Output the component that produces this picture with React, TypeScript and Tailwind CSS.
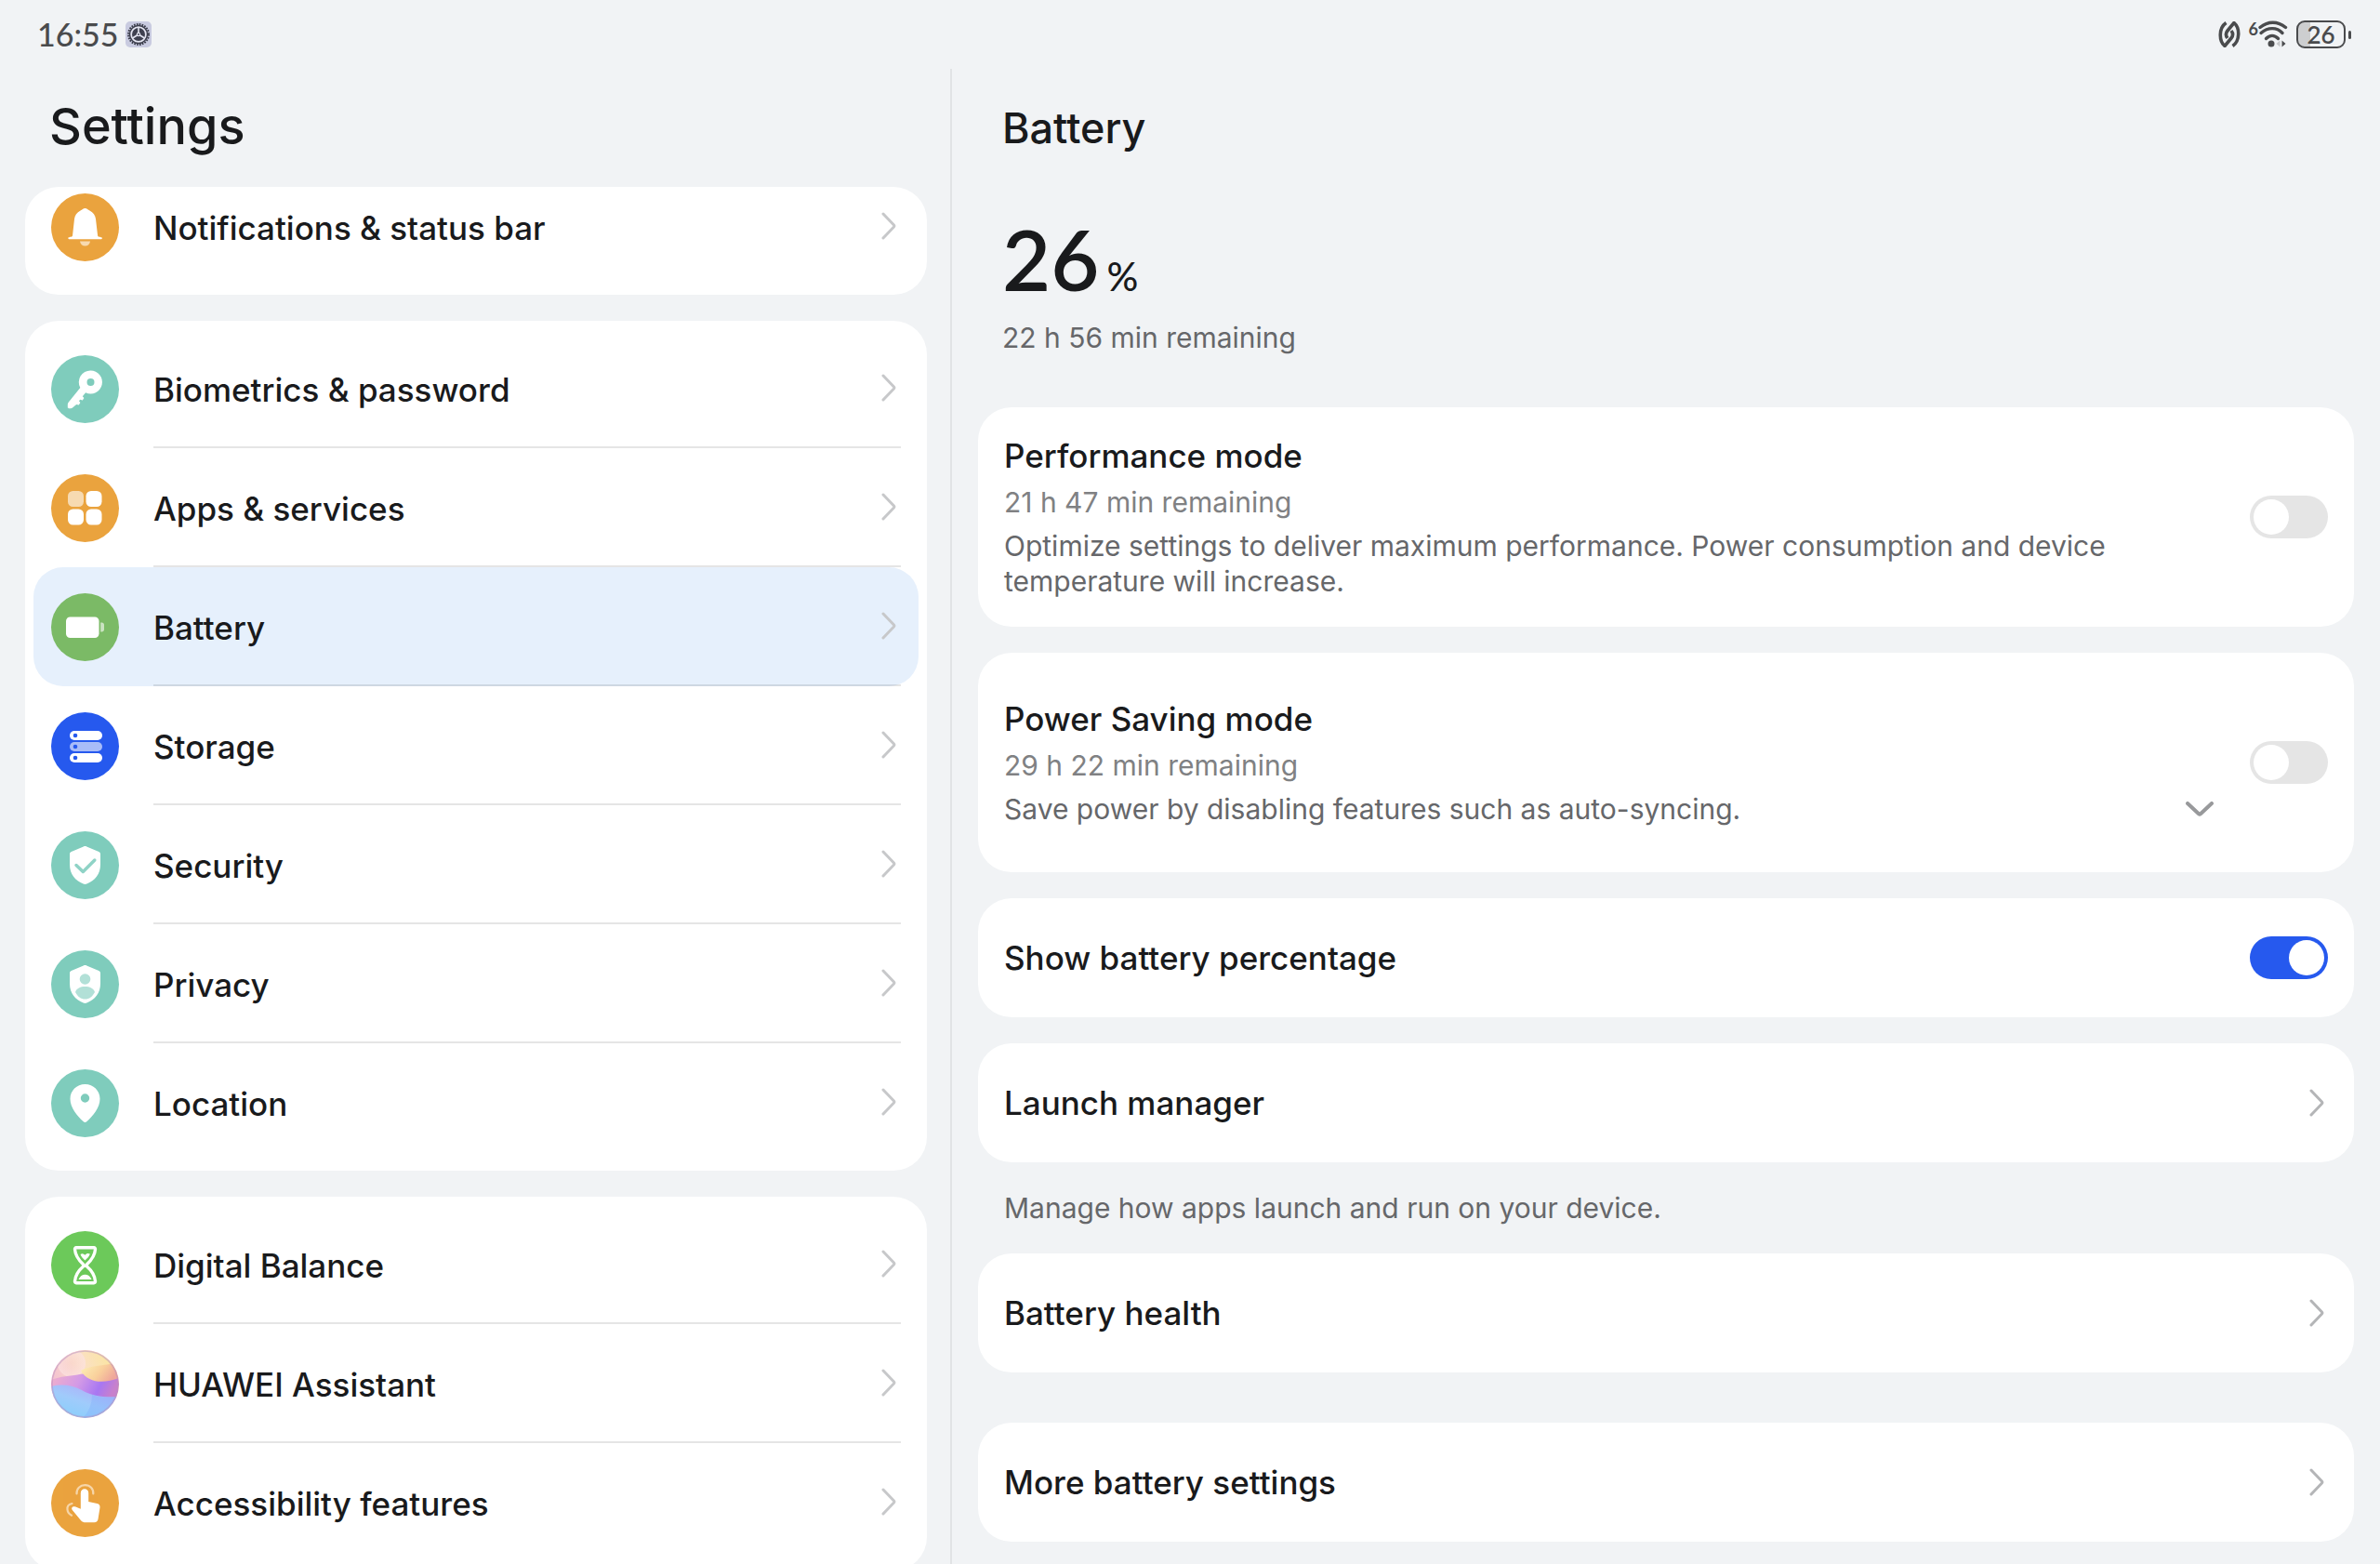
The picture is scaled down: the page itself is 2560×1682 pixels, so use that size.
import { useId, useState, type ReactNode } from "react";
import clsx from "clsx";

const icons: Record<string, ReactNode> = {
  bell: (
    <>
      <path d="M36.5 16c-2.2 0-3 1.5-5 2.6-3.8 2-6 5-6.5 9L23 45.5c-.2 1.6-4.7 1.2-4.7 2.5 0 .9.7 1.2 1.5 1.2h33.6c.8 0 1.5-.3 1.5-1.2 0-1.3-4.6-.9-4.8-2.5L48 27.6c-.5-4-2.7-7-6.5-9-2-1.100-2.800-2.600-5-2.600z" />
      <path d="M31 51.500h11c-.4 3-2.600 5-5.500 5s-5.100-2-5.500-5z" opacity=".6" />
    </>
  ),
  key: (
    <path
      fillRule="evenodd"
      d="M42.5 16.5a12.500 12.500 0 1 1-5.400 23.800l-3.300 4 1.600 1.600-1.600 2.600-2.600-.7-1.200 1.500 1.400 1.800-1.600 2.300-2.600-.4L23 56.500c-.6.5-1.300.7-2 .7h-2c-.8 0-1.200-.4-1.200-1.200v-3c0-1 .3-1.800 1-2.600L31.300 35A12.500 12.500 0 0 1 42.500 16.500zm0 8.500a4 4 0 1 0 0 8 4 4 0 0 0 0-8z"
    />
  ),
  apps: (
    <>
      <rect x="18" y="18" width="17" height="17" rx="5.5" opacity=".6" />
      <rect x="37.5" y="18" width="17" height="17" rx="5.5" />
      <rect x="18" y="37.5" width="17" height="17" rx="5.5" />
      <rect x="37.5" y="37.5" width="17" height="17" rx="5.5" />
    </>
  ),
  battery: (
    <>
      <rect x="16" y="25.5" width="35.5" height="22.5" rx="4.5" />
      <path d="M53.2 31.5h1.3c1.500 0 2.500 1 2.500 2.500v5c0 1.500-1 2.500-2.500 2.500h-1.300z" opacity=".6" />
    </>
  ),
  storage: (
    <>
      <rect x="20" y="20" width="35" height="10" rx="5" />
      <rect x="20" y="32" width="35" height="10" rx="5" opacity=".6" />
      <rect x="20" y="44" width="35" height="10" rx="5" />
      <g fill="#2659ee">
        <circle cx="26" cy="25" r="2.3" />
        <circle cx="26" cy="37" r="2.3" />
        <circle cx="26" cy="49" r="2.3" />
      </g>
    </>
  ),
  security: (
    <>
      <path d="M34.8 16.5c1.100-.6 2.300-.6 3.400 0L51.300 22c1.100.5 1.700 1.300 1.700 2.500V36c0 10-6 17.200-14.600 20.500-1.300.5-2.500.5-3.800 0C26 53.200 20 46 20 36V24.500c0-1.200.6-2 1.700-2.500z" />
      <path d="M27 36.500l7.300 7L46.800 31" fill="none" stroke="#8fd3c6" strokeWidth="3.500" strokeLinecap="round" strokeLinejoin="round" />
    </>
  ),
  privacy: (
    <>
      <path d="M34.8 16.5c1.100-.6 2.300-.6 3.400 0L51.300 22c1.100.5 1.700 1.300 1.700 2.500V36c0 10-6 17.200-14.600 20.500-1.300.5-2.500.5-3.800 0C26 53.200 20 46 20 36V24.500c0-1.200.6-2 1.700-2.500z" />
      <g fill="#b2e0d7">
        <circle cx="36.5" cy="31" r="5.8" />
        <path d="M26 45c1.500-4.200 5.500-6 10.500-6S45.500 40.800 47 45c-2.300 4.500-6 7.600-10.500 7.600S28.300 49.500 26 45z" />
      </g>
    </>
  ),
  location: (
    <path
      fillRule="evenodd"
      d="M36.5 16c9 0 16 7 16 15.700 0 9.300-7.500 18.300-14 24.400-1.300 1.200-2.700 1.200-4 0-6.500-6.100-14-15.100-14-24.400C20.500 23 27.500 16 36.500 16zm0 10.300a4.700 4.700 0 1 0 0 9.400 4.700 4.700 0 0 0 0-9.400z"
    />
  ),
  hourglass: (
    <>
      <path
        d="M27 17.800h19c1 0 1.600.7 1.500 1.700C47 27 42.500 32 38.500 35.700c-.8.8-.8 1.500 0 2.300C42.500 41.500 47 46.500 47.500 54c.1 1-.5 1.700-1.500 1.700H27c-1 0-1.600-.7-1.500-1.700.5-7.500 5-12.500 9-16 .8-.8.8-1.500 0-2.300C30.500 32 26 27 25.500 19.500c-.1-1 .5-1.700 1.500-1.700z"
        fill="none"
        stroke="white"
        strokeWidth="3.4"
      />
      <path d="M31.500 25c1.800-1.200 3.500-.8 5 .8 1.500-2 3.500-2.200 5.300-1.200-.8 2.600-2.900 4.800-5.300 6.900-2.200-1.900-4.200-4-5-6.500z" />
      <path d="M29.500 52c1.500-3.500 4-5.200 7-5.200s5.500 1.700 7 5.200z" />
    </>
  ),
  touch: (
    <>
      <path d="M31.800 25.500a4.200 4.200 0 0 1 8.400 0V35l9.300 2c2.200.5 3.300 2 3 4.200l-2 12.500c-.4 2.200-1.700 3.500-4 3.500h-9.500c-2 0-3.500-.6-4.900-2L22.800 44c-1-1.200-.8-2.700.4-3.400 1-.6 2-.6 3.200-.1l5.400 2.300z" />
      <g fill="none" stroke="white" strokeWidth="2.2" strokeLinecap="round" opacity=".55">
        <path d="M27.500 26.500c-.3-5.500 3.700-9.300 9-9.300s9.200 3.800 8.800 9.300" />
        <path d="M22.500 37c-3.500.7-5.500 3.300-5 6.700.3 2.600 1.800 4.600 4.500 6" />
      </g>
    </>
  ),
};

function RoundIcon({ name }: { name: string }) {
  return (
    <svg viewBox="0 0 73 73" fill="white" className="size-full">
      {icons[name]}
    </svg>
  );
}

function AssistantIcon() {
  return (
    <svg viewBox="0 0 73 73" className="size-full">
      <defs>
        <linearGradient id="sky" x1="0" y1=".5" x2="1" y2=".1">
          <stop offset="0" stopColor="#f3bfd2" />
          <stop offset=".5" stopColor="#fbe0c4" />
          <stop offset="1" stopColor="#fae796" />
        </linearGradient>
        <linearGradient id="dune" x1="0" y1="0" x2="1" y2=".4">
          <stop offset="0" stopColor="#fdf3b8" />
          <stop offset=".6" stopColor="#f9d09c" />
          <stop offset="1" stopColor="#efa79a" />
        </linearGradient>
        <linearGradient id="ribbon" x1="0" y1="0" x2="1" y2=".2">
          <stop offset="0" stopColor="#f1b0cb" />
          <stop offset=".45" stopColor="#d39ae6" />
          <stop offset=".78" stopColor="#a877f2" />
          <stop offset="1" stopColor="#c880cc" />
        </linearGradient>
        <linearGradient id="sea" x1=".1" y1="1" x2=".8" y2="0">
          <stop offset="0" stopColor="#84d0fb" />
          <stop offset=".5" stopColor="#a0cbfb" />
          <stop offset="1" stopColor="#b3a8f8" />
        </linearGradient>
        <radialGradient id="haze">
          <stop offset="0" stopColor="#fbd9dc" stopOpacity=".2" />
          <stop offset="1" stopColor="#fce3e2" stopOpacity=".7" />
        </radialGradient>
        <clipPath id="ball">
          <circle cx="36.5" cy="36.5" r="36.5" />
        </clipPath>
      </defs>
      <g clipPath="url(#ball)">
        <rect width="73" height="73" fill="url(#sky)" />
        <circle cx="22" cy="14" r="15" fill="url(#haze)" />
        <path d="M0 32c10-4 20-4 31-6 16-3 30 2 42 3v26H0z" fill="url(#ribbon)" />
        <path d="M32 22c10-6 26-5 41-9v17c-16 6-33 6-41-8z" fill="url(#dune)" />
        <path d="M0 39c12-3 24-1 33 4 12 7 26 8 40 7v23H0z" fill="url(#sea)" />
        <path d="M44 48c0 9-3 18-10 25h39V50c-10 1-20 1-29-2z" fill="#7aa8fb" opacity=".3" />
      </g>
      <circle cx="36.5" cy="36.5" r="35.5" fill="none" stroke="#b58fc0" strokeWidth="1.5" opacity=".5" />
    </svg>
  );
}

type Item = { label: string; icon: string; color: string; selected?: boolean };

const groups: Item[][] = [
  [{ label: "Notifications & status bar", icon: "bell", color: "bg-[#eaa33e]" }],
  [
    { label: "Biometrics & password", icon: "key", color: "bg-[#7fccbc]" },
    { label: "Apps & services", icon: "apps", color: "bg-[#eaa33e]" },
    { label: "Battery", icon: "battery", color: "bg-[#7bba66]", selected: true },
    { label: "Storage", icon: "storage", color: "bg-[#2659ee]" },
    { label: "Security", icon: "security", color: "bg-[#7fccbc]" },
    { label: "Privacy", icon: "privacy", color: "bg-[#7fccbc]" },
    { label: "Location", icon: "location", color: "bg-[#7fccbc]" },
  ],
  [
    { label: "Digital Balance", icon: "hourglass", color: "bg-[#6cc95a]" },
    { label: "HUAWEI Assistant", icon: "assistant", color: "bg-[#f6b9cf]" },
    { label: "Accessibility features", icon: "touch", color: "bg-[#eaa33e]" },
  ],
];

function Chevron({ className }: { className?: string }) {
  return (
    <svg viewBox="0 0 16 30" className={clsx("h-[30px] w-4 shrink-0", className)} fill="none" stroke="currentColor" strokeWidth="3" strokeLinecap="round" strokeLinejoin="round">
      <path d="M2 2l11.500 12c.6.600.6 1.400 0 2L2 28" />
    </svg>
  );
}

function MenuRow({ item }: { item: Item }) {
  return (
    <a
      href="#"
      aria-current={item.selected ? "page" : undefined}
      className={clsx("group flex h-32 items-center gap-[37px] rounded-[32px] px-[19px]", item.selected && "bg-[#e6f0fc]")}
    >
      <span className={clsx("size-[73px] shrink-0 overflow-hidden rounded-full", item.color)}>
        {item.icon === "assistant" ? <AssistantIcon /> : <RoundIcon name={item.icon} />}
      </span>
      <span className="flex h-full flex-1 items-center justify-between border-b-2 border-black/10 pr-[5px] group-last:border-transparent">
        <span className="pt-1">{item.label}</span>
        <Chevron className="text-[#c7c8ca]" />
      </span>
    </a>
  );
}

function Toggle({ id, initial = false }: { id: string; initial?: boolean }) {
  const [on, setOn] = useState(initial);
  return (
    <input
      id={id}
      type="checkbox"
      role="switch"
      checked={on}
      onChange={() => setOn(!on)}
      className="flex h-[46px] w-[84px] shrink-0 appearance-none items-center rounded-full bg-[#e5e5e5] px-1 before:size-[38px] before:rounded-full before:bg-white checked:justify-end checked:bg-[#2659ee]"
    />
  );
}

type ModeCardProps = { title: string; remaining: string; description: string; expandable?: boolean; className: string };

function ModeCard({ title, remaining, description, expandable, className }: ModeCardProps) {
  const id = useId();
  return (
    <section className={clsx("flex items-center gap-[39px] rounded-[36px] bg-white px-7", className)}>
      <div className="flex flex-1 flex-col gap-[9px] text-[30px] leading-[38px] font-normal text-[#66676a]">
        <label htmlFor={id} className="text-[35px] leading-[44px] font-medium text-[#191a1c]">
          {title}
        </label>
        <p className="text-[#808183]">{remaining}</p>
        <div className="flex items-center justify-between">
          <p>{description}</p>
          {expandable && (
            <button aria-label="Show details">
              <svg viewBox="0 0 30 16" className="h-4 w-[30px]" fill="none" stroke="#98999b" strokeWidth="4" strokeLinecap="round" strokeLinejoin="round">
                <path d="M2 2l12 11.200c.6.500 1.400.5 2 0L28 2" />
              </svg>
            </button>
          )}
        </div>
      </div>
      <Toggle id={id} />
    </section>
  );
}

function LinkCard({ label, className }: { label: string; className?: string }) {
  return (
    <a href="#" className={clsx("flex h-32 shrink-0 items-center justify-between rounded-[36px] bg-white pr-8 pl-7", className)}>
      {label}
      <Chevron className="text-[#b4b5b7]" />
    </a>
  );
}

function StatusBar() {
  return (
    <header className="flex h-[74px] shrink-0 items-center justify-between pr-[31px] pl-10 text-[#4a4b4d]">
      <div className="flex items-center gap-2">
        <time className="font-[Lato,sans-serif] text-[34px] leading-[40px] font-medium">16:55</time>
        <svg viewBox="0 0 28 28" className="size-7">
          <rect width="28" height="28" rx="5" fill="#c9cbe0" />
          <circle cx="14" cy="14" r="11" fill="none" stroke="#3b3d4b" strokeWidth="2" strokeDasharray="1.7 1.2" />
          <circle cx="14" cy="14" r="9.5" fill="#e4e5f1" stroke="#3b3d4b" strokeWidth="1.5" />
          <circle cx="14" cy="14" r="7" fill="#3f4150" />
          <path d="M14 14V6.500M14 14l-6.500 4M14 14l6.500 4" stroke="#e4e5f1" strokeWidth="1.6" />
          <circle cx="14" cy="14" r="2.200" fill="#e4e5f1" />
          <circle cx="14" cy="14" r="1" fill="#3f4150" />
        </svg>
      </div>
      <div className="flex items-center">
        <svg viewBox="0 0 24 28" className="mr-[9px] h-7 w-6" fill="none" stroke="currentColor" strokeWidth="3.6">
          <path d="M8.500 1.500C.5 7 .5 21 7 26.500L14 18c2-2.500 2-5.500 0-8" />
          <path d="M15.500 26.500C23.500 21 23.500 7 17 1.500L10 10c-2 2.500-2 5.500 0 8" />
        </svg>
        <span className="mb-3 font-[Lato,sans-serif] text-[18px] leading-4 font-bold">6</span>
        <svg viewBox="0 0 32 30" className="mr-[9px] h-[30px] w-8" fill="none" stroke="currentColor" strokeWidth="3.4" strokeLinecap="round">
          <path d="M2 7.500C10.500.5 21 .5 29.500 7.500" />
          <path d="M3 13.500c7.500-6.500 17-6.500 23 0" />
          <path d="M8.500 19.500c4-4 9-4 13 0" />
          <circle cx="14" cy="25" r="3.5" fill="currentColor" stroke="none" />
          <path d="M23.500 21.500v7l-4-3.500z" fill="#c6c7c9" stroke="none" />
          <path d="M25.500 21.500v7l4-3.500z" fill="currentColor" stroke="none" />
        </svg>
        <span className="flex h-[30px] w-[53px] items-center justify-center rounded-[9px] border-2 border-[#4a4b4d] bg-linear-to-r from-[#cdced0] from-26% to-transparent to-26% font-[Lato,sans-serif] text-[26px] leading-[26px] font-semibold">
          26
        </span>
        <span className="ml-[3px] h-[9px] w-[3px] rounded-full bg-[#4a4b4d]" />
      </div>
    </header>
  );
}

export default function App() {
  return (
    <div className="flex h-screen flex-col overflow-hidden bg-[#f1f3f5] font-[Inter,sans-serif] text-[35px] leading-[44px] font-medium text-[#191a1c]">
      <StatusBar />

      <div className="flex min-h-0 flex-1">
        <nav className="flex w-2/5 flex-col border-r-2 border-[#e1e3e5] pr-[25px] pl-[27px]">
          <h1 className="flex h-[127px] shrink-0 items-center px-[26px] pb-1 text-[54px] leading-[64px]">Settings</h1>
          <div className="flex min-h-0 flex-1 flex-col gap-7 overflow-hidden rounded-t-[36px]">
            {groups.map((group, i) => (
              <div
                key={group[0].label}
                className={clsx("shrink-0 rounded-[36px] bg-white px-[9px] pb-[9px]", i === 0 ? "-mt-[21px]" : "pt-[9px]")}
              >
                {group.map((item) => (
                  <MenuRow key={item.label} item={item} />
                ))}
              </div>
            ))}
          </div>
        </nav>

        <main className="flex flex-1 flex-col overflow-hidden px-7">
          <h2 className="flex h-32 shrink-0 items-center px-[26px] text-[45px] leading-[52px]">Battery</h2>

          <div className="px-[26px] pt-6 pb-[56px]">
            <p className="flex items-baseline gap-2 font-[Lato,sans-serif] text-[90px] leading-[104px] font-semibold">
              26
              <span className="text-[42px] leading-[48px] font-medium">%</span>
            </p>
            <p className="mt-[14px] text-[30px] leading-[38px] font-normal text-[#66676a]">22 h 56 min remaining</p>
          </div>

          <ModeCard
            title="Performance mode"
            remaining="21 h 47 min remaining"
            description="Optimize settings to deliver maximum performance. Power consumption and device temperature will increase."
            className="py-[30px]"
          />
          <ModeCard
            title="Power Saving mode"
            remaining="29 h 22 min remaining"
            description="Save power by disabling features such as auto-syncing."
            expandable
            className="mt-7 py-[49px]"
          />

          <section className="mt-7 flex h-32 shrink-0 items-center justify-between rounded-[36px] bg-white px-7">
            <label htmlFor="show-percentage">Show battery percentage</label>
            <Toggle id="show-percentage" initial />
          </section>

          <LinkCard label="Launch manager" className="mt-7" />
          <p className="px-7 py-[30px] text-[30px] leading-[38px] font-normal text-[#66676a]">
            Manage how apps launch and run on your device.
          </p>
          <LinkCard label="Battery health" />
          <LinkCard label="More battery settings" className="mt-[54px]" />
        </main>
      </div>
    </div>
  );
}
